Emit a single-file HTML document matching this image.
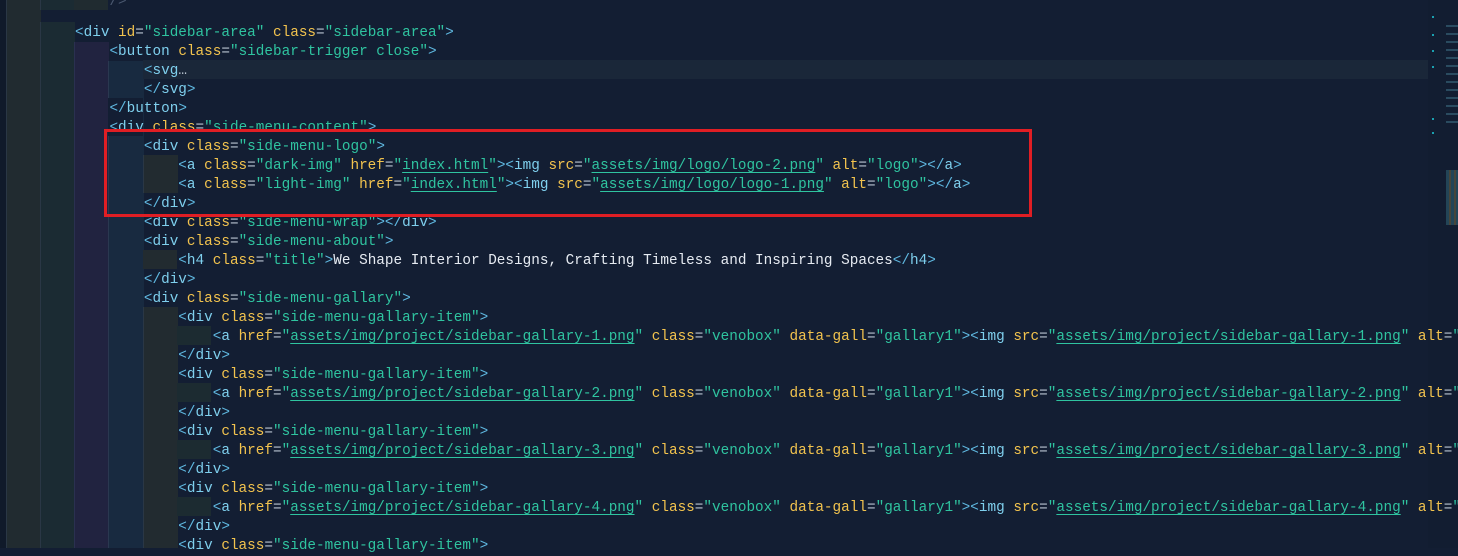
<!DOCTYPE html>
<html><head><meta charset="utf-8"><style>
body{margin:0;width:1458px;height:548px;overflow:hidden;background:#131e33;position:relative;font-family:"Liberation Mono",monospace;}
.b{position:absolute;}
.l{position:absolute;left:75px;height:19px;line-height:19px;font-size:14.35px;white-space:pre;color:#dfe6ee;margin-top:2px;}
.p{color:#5fb8e0}.t{color:#7fd0ee}.a{color:#f2c34e}.s{color:#2fc4a0}.e{color:#b8c4d0}.w{color:#e6ebf2}
.u{text-decoration:underline;text-underline-offset:3px}
</style></head><body>
<div class="b" style="left:0;top:0;width:6px;height:548px;background:#101a2a"></div>
<div class="b" style="left:6px;top:0;width:34px;height:548px;background:#212b30;border-left:1px solid #2a3745"></div>
<div class="b" style="left:40px;top:22px;width:34px;height:526px;background:#1b2b33;border-left:1px solid #2a3745"></div>
<div class="b" style="left:40px;top:0;width:34px;height:10px;background:#1b2b33;border-left:1px solid #2a3745"></div>
<div class="b" style="left:74px;top:0;width:34px;height:10px;background:#202b30"></div>
<div class="b" style="left:74px;top:42px;width:34px;height:506px;background:#212340;border-left:1px solid #2a3050"></div>
<div class="b" style="left:108px;top:61px;width:35px;height:487px;background:#182a40;border-left:1px solid #2a3850"></div>
<div class="b" style="left:108px;top:98px;width:35px;height:19px;background:#131e33"></div>
<div class="b" style="left:108px;top:117px;width:35px;height:19px;background:#131e33"></div>
<div class="b" style="left:143px;top:155px;width:34px;height:38px;background:#222b30;border-left:1px solid #2a3745"></div>
<div class="b" style="left:143px;top:250px;width:34px;height:19px;background:#222b30"></div>
<div class="b" style="left:143px;top:307px;width:34px;height:241px;background:#222b30;border-left:1px solid #2a3745"></div>
<div class="b" style="left:177px;top:326px;width:34px;height:19px;background:#1c2b31"></div>
<div class="b" style="left:177px;top:383px;width:34px;height:19px;background:#1c2b31"></div>
<div class="b" style="left:177px;top:440px;width:34px;height:19px;background:#1c2b31"></div>
<div class="b" style="left:177px;top:497px;width:34px;height:19px;background:#1c2b31"></div>
<div class="b" style="left:143px;top:60px;width:1287px;height:19px;background:#1a2739"></div>
<div class="b" style="left:1428px;top:0;width:30px;height:548px;background:#121d31"></div>
<div class="b" style="left:1432px;top:16px;width:2px;height:2px;background:#1aa0b0"></div>
<div class="b" style="left:1432px;top:34px;width:2px;height:2px;background:#1aa0b0"></div>
<div class="b" style="left:1432px;top:50px;width:2px;height:2px;background:#1aa0b0"></div>
<div class="b" style="left:1432px;top:66px;width:2px;height:2px;background:#1aa0b0"></div>
<div class="b" style="left:1432px;top:118px;width:2px;height:2px;background:#1aa0b0"></div>
<div class="b" style="left:1432px;top:132px;width:2px;height:2px;background:#1aa0b0"></div>
<div class="b" style="left:1446px;top:25px;width:12px;height:100px;background:repeating-linear-gradient(#3a6a80 0 2px,transparent 2px 8px);opacity:.6"></div>
<div class="b" style="left:1446px;top:170px;width:12px;height:55px;background:repeating-linear-gradient(90deg,#2e6070 0 3px,#6a6040 3px 5px);opacity:.6"></div>

<div class="l" style="top:-9px;color:#4a5870">    /&gt;</div>
<div class="l" style="top:22px"><span class="p">&lt;</span><span class="t">div</span> <span class="a">id</span><span class="e">=</span><span class="s">"sidebar-area"</span> <span class="a">class</span><span class="e">=</span><span class="s">"sidebar-area"</span><span class="p">&gt;</span></div>
<div class="l" style="top:41px">    <span class="p">&lt;</span><span class="t">button</span> <span class="a">class</span><span class="e">=</span><span class="s">"sidebar-trigger close"</span><span class="p">&gt;</span></div>
<div class="l" style="top:60px">        <span class="p">&lt;</span><span class="t">svg</span><span class="e">…</span></div>
<div class="l" style="top:79px">        <span class="p">&lt;/</span><span class="t">svg</span><span class="p">&gt;</span></div>
<div class="l" style="top:98px">    <span class="p">&lt;/</span><span class="t">button</span><span class="p">&gt;</span></div>
<div class="l" style="top:117px">    <span class="p">&lt;</span><span class="t">div</span> <span class="a">class</span><span class="e">=</span><span class="s">"side-menu-content"</span><span class="p">&gt;</span></div>
<div class="l" style="top:136px">        <span class="p">&lt;</span><span class="t">div</span> <span class="a">class</span><span class="e">=</span><span class="s">"side-menu-logo"</span><span class="p">&gt;</span></div>
<div class="l" style="top:155px">            <span class="p">&lt;</span><span class="t">a</span> <span class="a">class</span><span class="e">=</span><span class="s">"dark-img"</span> <span class="a">href</span><span class="e">=</span><span class="s">"<span class="u">index.html</span>"</span><span class="p">&gt;&lt;</span><span class="t">img</span> <span class="a">src</span><span class="e">=</span><span class="s">"<span class="u">assets/img/logo/logo-2.png</span>"</span> <span class="a">alt</span><span class="e">=</span><span class="s">"logo"</span><span class="p">&gt;&lt;/</span><span class="t">a</span><span class="p">&gt;</span></div>
<div class="l" style="top:174px">            <span class="p">&lt;</span><span class="t">a</span> <span class="a">class</span><span class="e">=</span><span class="s">"light-img"</span> <span class="a">href</span><span class="e">=</span><span class="s">"<span class="u">index.html</span>"</span><span class="p">&gt;&lt;</span><span class="t">img</span> <span class="a">src</span><span class="e">=</span><span class="s">"<span class="u">assets/img/logo/logo-1.png</span>"</span> <span class="a">alt</span><span class="e">=</span><span class="s">"logo"</span><span class="p">&gt;&lt;/</span><span class="t">a</span><span class="p">&gt;</span></div>
<div class="l" style="top:193px">        <span class="p">&lt;/</span><span class="t">div</span><span class="p">&gt;</span></div>
<div class="l" style="top:212px">        <span class="p">&lt;</span><span class="t">div</span> <span class="a">class</span><span class="e">=</span><span class="s">"side-menu-wrap"</span><span class="p">&gt;&lt;/</span><span class="t">div</span><span class="p">&gt;</span></div>
<div class="l" style="top:231px">        <span class="p">&lt;</span><span class="t">div</span> <span class="a">class</span><span class="e">=</span><span class="s">"side-menu-about"</span><span class="p">&gt;</span></div>
<div class="l" style="top:250px">            <span class="p">&lt;</span><span class="t">h4</span> <span class="a">class</span><span class="e">=</span><span class="s">"title"</span><span class="p">&gt;</span><span class="w">We Shape Interior Designs, Crafting Timeless and Inspiring Spaces</span><span class="p">&lt;/</span><span class="t">h4</span><span class="p">&gt;</span></div>
<div class="l" style="top:269px">        <span class="p">&lt;/</span><span class="t">div</span><span class="p">&gt;</span></div>
<div class="l" style="top:288px">        <span class="p">&lt;</span><span class="t">div</span> <span class="a">class</span><span class="e">=</span><span class="s">"side-menu-gallary"</span><span class="p">&gt;</span></div>

<div class="l" style="top:307px">            <span class="p">&lt;</span><span class="t">div</span> <span class="a">class</span><span class="e">=</span><span class="s">"side-menu-gallary-item"</span><span class="p">&gt;</span></div>
<div class="l" style="top:326px">                <span class="p">&lt;</span><span class="t">a</span> <span class="a">href</span><span class="e">=</span><span class="s">"<span class="u">assets/img/project/sidebar-gallary-1.png</span>"</span> <span class="a">class</span><span class="e">=</span><span class="s">"venobox"</span> <span class="a">data-gall</span><span class="e">=</span><span class="s">"gallary1"</span><span class="p">&gt;&lt;</span><span class="t">img</span> <span class="a">src</span><span class="e">=</span><span class="s">"<span class="u">assets/img/project/sidebar-gallary-1.png</span>"</span> <span class="a">alt</span><span class="e">=</span><span class="s">"</span></div>
<div class="l" style="top:345px">            <span class="p">&lt;/</span><span class="t">div</span><span class="p">&gt;</span></div>
<div class="l" style="top:364px">            <span class="p">&lt;</span><span class="t">div</span> <span class="a">class</span><span class="e">=</span><span class="s">"side-menu-gallary-item"</span><span class="p">&gt;</span></div>
<div class="l" style="top:383px">                <span class="p">&lt;</span><span class="t">a</span> <span class="a">href</span><span class="e">=</span><span class="s">"<span class="u">assets/img/project/sidebar-gallary-2.png</span>"</span> <span class="a">class</span><span class="e">=</span><span class="s">"venobox"</span> <span class="a">data-gall</span><span class="e">=</span><span class="s">"gallary1"</span><span class="p">&gt;&lt;</span><span class="t">img</span> <span class="a">src</span><span class="e">=</span><span class="s">"<span class="u">assets/img/project/sidebar-gallary-2.png</span>"</span> <span class="a">alt</span><span class="e">=</span><span class="s">"</span></div>
<div class="l" style="top:402px">            <span class="p">&lt;/</span><span class="t">div</span><span class="p">&gt;</span></div>
<div class="l" style="top:421px">            <span class="p">&lt;</span><span class="t">div</span> <span class="a">class</span><span class="e">=</span><span class="s">"side-menu-gallary-item"</span><span class="p">&gt;</span></div>
<div class="l" style="top:440px">                <span class="p">&lt;</span><span class="t">a</span> <span class="a">href</span><span class="e">=</span><span class="s">"<span class="u">assets/img/project/sidebar-gallary-3.png</span>"</span> <span class="a">class</span><span class="e">=</span><span class="s">"venobox"</span> <span class="a">data-gall</span><span class="e">=</span><span class="s">"gallary1"</span><span class="p">&gt;&lt;</span><span class="t">img</span> <span class="a">src</span><span class="e">=</span><span class="s">"<span class="u">assets/img/project/sidebar-gallary-3.png</span>"</span> <span class="a">alt</span><span class="e">=</span><span class="s">"</span></div>
<div class="l" style="top:459px">            <span class="p">&lt;/</span><span class="t">div</span><span class="p">&gt;</span></div>
<div class="l" style="top:478px">            <span class="p">&lt;</span><span class="t">div</span> <span class="a">class</span><span class="e">=</span><span class="s">"side-menu-gallary-item"</span><span class="p">&gt;</span></div>
<div class="l" style="top:497px">                <span class="p">&lt;</span><span class="t">a</span> <span class="a">href</span><span class="e">=</span><span class="s">"<span class="u">assets/img/project/sidebar-gallary-4.png</span>"</span> <span class="a">class</span><span class="e">=</span><span class="s">"venobox"</span> <span class="a">data-gall</span><span class="e">=</span><span class="s">"gallary1"</span><span class="p">&gt;&lt;</span><span class="t">img</span> <span class="a">src</span><span class="e">=</span><span class="s">"<span class="u">assets/img/project/sidebar-gallary-4.png</span>"</span> <span class="a">alt</span><span class="e">=</span><span class="s">"</span></div>
<div class="l" style="top:516px">            <span class="p">&lt;/</span><span class="t">div</span><span class="p">&gt;</span></div>
<div class="l" style="top:535px">            <span class="p">&lt;</span><span class="t">div</span> <span class="a">class</span><span class="e">=</span><span class="s">"side-menu-gallary-item"</span><span class="p">&gt;</span></div>

<div class="b" style="left:104px;top:129px;width:922px;height:82px;border:3px solid #e01e24"></div>
</body></html>
